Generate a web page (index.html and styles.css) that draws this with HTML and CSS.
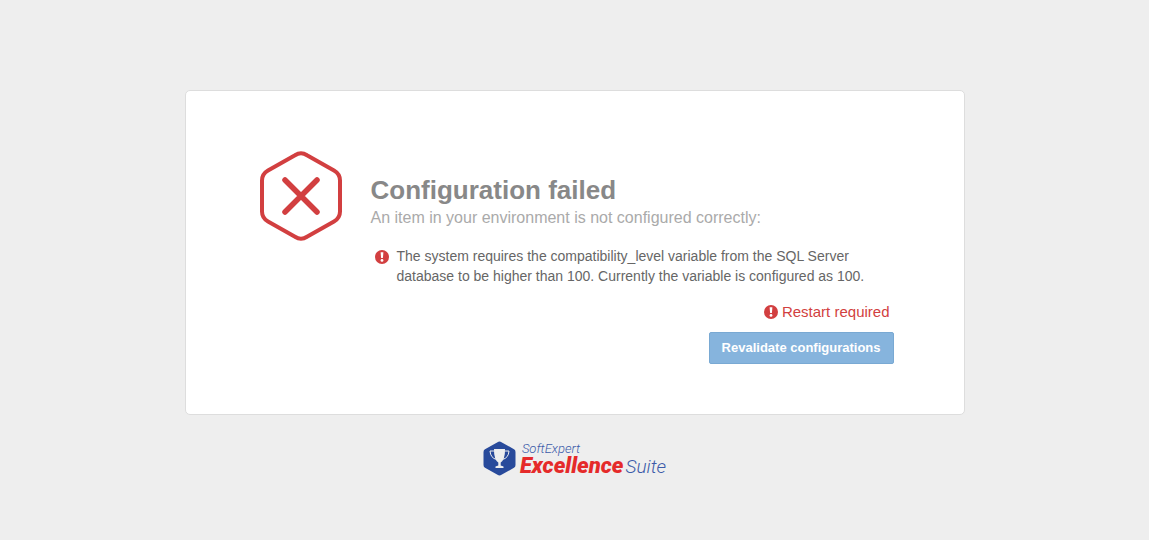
FILE: index.html
```html
<!DOCTYPE html>
<html lang="en">
<head>
<meta charset="utf-8">
<meta name="viewport" content="width=device-width, initial-scale=1">
<title>Configuration failed</title>
<link rel="stylesheet" href="styles.css">
</head>
<body>
<svg class="defs" aria-hidden="true">
  <symbol id="alert" viewBox="0 0 14 14">
    <circle cx="7" cy="7" r="7" fill="#d23f40"/>
    <path d="M5.600 2.200h2.800l-.5 5.800H6.100z" fill="#fff"/>
    <circle cx="7" cy="10.400" r="1.400" fill="#fff"/>
  </symbol>
</svg>
<main class="page">
  <section class="card">
    <svg class="status-icon" viewBox="0 0 82 90" fill="none" stroke="#d23f40" aria-hidden="true">
      <path d="M35 4.200Q41 .300 47 4.200L74 19.500Q80 23 80 29.500V60.500Q80 67 74 70.500L47 85.800Q41 89.700 35 85.800L8 70.500Q2 67 2 60.500V29.500Q2 23 8 19.500Z" stroke-width="4"/>
      <path d="M25 29L57 61M57 29L25 61" stroke-width="5.500" stroke-linecap="round"/>
    </svg>
    <div class="content">
      <h1 class="title">Configuration failed</h1>
      <p class="subtitle">An item in your environment is not configured correctly:</p>
      <ul class="issues">
        <li class="issue">
          <svg class="alert-icon issue-icon" aria-hidden="true"><use href="#alert"/></svg>
          <span>The system requires the compatibility_level variable from the SQL Server database to be higher than 100. Currently the variable is configured as 100.</span>
        </li>
      </ul>
      <p class="restart"><svg class="alert-icon" aria-hidden="true"><use href="#alert"/></svg><span>Restart required</span></p>
      <button class="button" type="button">Revalidate configurations</button>
    </div>
  </section>
  <footer class="brand">
    <svg class="brand-icon" viewBox="0 0 33 35" aria-hidden="true">
      <path d="M14.500 1.200Q16.500 0 18.500 1.200L31 8.200Q32.500 9 32.500 11V24Q32.500 26 31 26.800L18.500 33.800Q16.500 35 14.500 33.800L2 26.800Q.5 26 .5 24V11Q.5 9 2 8.200Z" fill="#284a9b"/>
      <path d="M7 10H12Q12.200 16.500 13.500 18.500Q7.500 17 7 10ZM26 10H21Q20.800 16.500 19.500 18.500Q25.500 17 26 10Z" fill="none" stroke="#eee" stroke-width="1"/>
      <path d="M11 8H22Q22 19 17.700 21.500V24.500L20.500 25.500V27H12.500V25.500L15.300 24.500V21.500Q11 19 11 8Z" fill="#eee"/>
    </svg>
    <div class="brand-text">
      <span class="brand-company">SoftExpert</span>
      <span class="brand-product"><strong class="brand-strong">Excellence</strong><span class="brand-suite">Suite</span></span>
    </div>
  </footer>
</main>
</body>
</html>
```
FILE: styles.css
```css
* {
  box-sizing: border-box;
}

body {
  margin: 0;
  background: #eee;
  color: #666;
  font: 14px/20px "Liberation Sans", Arial, sans-serif;
}

.defs {
  position: absolute;
  width: 0;
  height: 0;
}

.page {
  display: flex;
  flex-direction: column;
  align-items: center;
  padding: 90px 16px 24px;
}

.card {
  display: flex;
  align-items: flex-start;
  gap: 29px;
  width: 100%;
  max-width: 780px;
  padding: 60px 70px 50px 74px;
  background: #fff;
  border: 1px solid #ddd;
  border-radius: 5px;
}

.status-icon {
  flex: none;
  width: 82px;
  height: 90px;
}

.content {
  display: flex;
  flex: 1;
  flex-direction: column;
  padding-top: 24px;
}

.title {
  margin: 0;
  color: #888;
  font-size: 26px;
  line-height: 30px;
}

.subtitle {
  margin: 3px 0 0;
  color: #aaa;
  font-size: 16px;
  line-height: 20px;
}

.issues {
  margin: 18px 0 0;
  padding: 0;
  list-style: none;
}

.issue {
  display: flex;
  gap: 8px;
  padding: 0 20px 0 4px;
}

.alert-icon {
  flex: none;
  width: 14px;
  height: 14px;
}

.issue-icon {
  margin-top: 4px;
}

.restart {
  display: flex;
  align-items: center;
  align-self: flex-end;
  gap: 4px;
  margin: 16px 4px 10px 0;
  color: #d23f40;
  font-size: 15px;
}

.button {
  align-self: flex-end;
  height: 32px;
  padding: 0 12px;
  background: #86b4dd;
  border: 1px solid #79a9d3;
  border-radius: 2px;
  color: #fff;
  font: bold 13px/20px "Liberation Sans", Arial, sans-serif;
}

.brand {
  display: flex;
  gap: 4px;
  margin-top: 26px;
  font-family: Roboto, sans-serif;
  font-style: italic;
  color: #3c5ba9;
}

.brand-icon {
  width: 33px;
  height: 35px;
}

.brand-text {
  display: flex;
  flex-direction: column;
}

.brand-company {
  padding-left: 2px;
  font-size: 13px;
  font-weight: 300;
  line-height: 16px;
}

.brand-product {
  display: flex;
  align-items: baseline;
  gap: 2px;
  font-size: 22px;
  line-height: 18px;
}

.brand-strong {
  color: #e52a2a;
  font-weight: 900;
}

.brand-suite {
  font-size: 19px;
  font-weight: 300;
}
```
